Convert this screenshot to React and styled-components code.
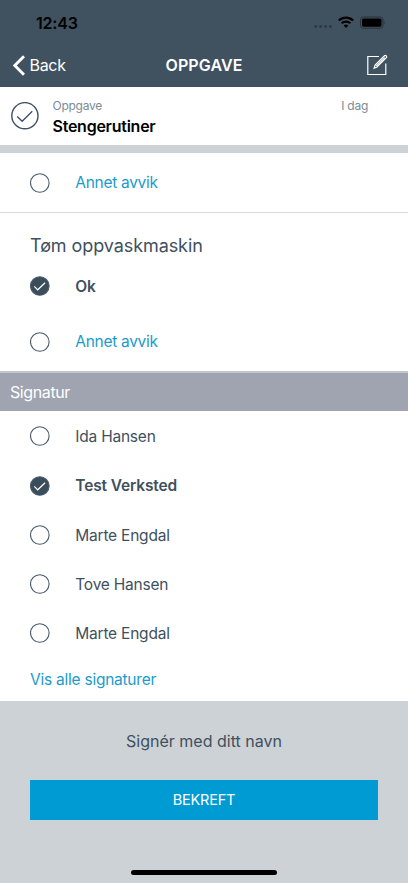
import { useState } from 'react'
import styled, { createGlobalStyle } from 'styled-components'

const GlobalStyle = createGlobalStyle`
    * {
        box-sizing: border-box;
    }
    body {
        margin: 0;
        background-color: #cdd2d6;
        font-family: Inter, "Liberation Sans", sans-serif;
        color: #3f505e;
    }
    button {
        font-family: inherit;
        border: none;
        padding: 0;
        background: none;
        cursor: pointer;
    }
`

const Screen = styled.div`
    width: 408px;
    height: 883px;
    display: flex;
    flex-direction: column;
    overflow: hidden;
    white-space: nowrap;
`

const StatusBar = styled.div`
    height: 44px;
    flex: none;
    padding: 1px 21px 0 36px;
    display: flex;
    align-items: center;
    justify-content: space-between;
    background-color: #40515f;
    color: black;
`

const Clock = styled.span`
    font-size: 16px;
    font-weight: 600;
    letter-spacing: -0.2px;
`

const NavBar = styled.header`
    height: 43px;
    flex: none;
    padding: 0 20px 0 13px;
    display: grid;
    grid-template-columns: 1fr auto 1fr;
    align-items: center;
    background-color: #40515f;
    border-bottom: 1px solid #424b60;
    color: white;
`

const BackButton = styled.button`
    display: flex;
    align-items: center;
    gap: 4.5px;
    font-size: 16px;
    letter-spacing: -0.3px;
    color: white;
`

const NavTitle = styled.h1`
    margin: 0 0 0 7px;
    font-size: 16px;
    font-weight: 600;
    letter-spacing: 0.1px;
`

const EditButton = styled.button`
    justify-self: end;
    display: flex;
`

const TaskCard = styled.section`
    height: 66px;
    flex: none;
    padding: 11px 40px 0 11px;
    display: flex;
    align-items: flex-start;
    background-color: white;
    border-bottom: 8px solid #cdd2d6;
`

const TaskIcon = styled.svg`
    margin: 3.5px 13.5px 0 0;
`

const TaskInfo = styled.div`
    flex: 1;
`

const Caption = styled.div`
    font-size: 12px;
    line-height: 16px;
    letter-spacing: -0.25px;
    color: #7b8b98;
`

const TaskName = styled.div`
    font-size: 16px;
    line-height: 20px;
    margin-top: 2px;
    font-weight: 600;
    letter-spacing: -0.25px;
    color: black;
`

const Question = styled.section`
    flex: none;
    padding-bottom: ${(props) => props.$bottom || 0};
    background-color: white;
    border-bottom: ${(props) => props.$border};
`

const QuestionTitle = styled.h2`
    margin: 0;
    padding: 20px 0 0 30px;
    font-size: 18px;
    line-height: 25px;
    font-weight: 400;
    letter-spacing: -0.08px;
`

const OptionButton = styled.button`
    width: 100%;
    height: ${(props) => props.$height || '49.25px'};
    padding-left: 30px;
    display: flex;
    align-items: center;
    gap: 25.3px;
    font-size: 15.5px;
    line-height: 20px;
    font-weight: ${(props) => (props.$checked ? 600 : 400)};
    letter-spacing: ${(props) => (props.$link ? '-0.3px' : props.$checked ? '-0.13px' : '-0.22px')};
    color: ${(props) => (props.$link ? '#1b9bcb' : '#3f505e')};
`

const OptionLabel = styled.span`
    padding-top: 1.4px;
`

const SectionHeader = styled.h2`
    height: 38px;
    flex: none;
    margin: 0;
    padding-left: 10px;
    display: flex;
    align-items: center;
    font-size: 16px;
    font-weight: 400;
    letter-spacing: -0.4px;
    background-color: #9fa4b0;
    color: white;
`

const Signatures = styled.section`
    height: 290px;
    flex: none;
    padding-top: 0.75px;
    background-color: white;
`

const ShowAll = styled.button`
    height: 43px;
    padding-left: 30px;
    font-size: 15.5px;
    letter-spacing: -0.24px;
    color: #1b9bcb;
`

const Footer = styled.footer`
    flex: 1;
    padding: 29px 30px 8px;
    display: flex;
    flex-direction: column;
    align-items: center;
    background-color: #cdd2d6;
`

const Hint = styled.div`
    font-size: 16px;
    line-height: 22px;
`

const ConfirmButton = styled.button`
    width: 100%;
    height: 39.5px;
    margin-top: 28px;
    background-color: #009bd3;
    color: white;
    font-size: 14.5px;
    letter-spacing: -0.2px;
`

const HomeIndicator = styled.div`
    width: 146px;
    height: 5px;
    margin-top: auto;
    border-radius: 3px;
    background-color: black;
`

const StatusIcons = () => (
    <svg width="73" height="14" viewBox="0 0 73 14">
        <g fill="#2c3944">
            <circle cx="1.7" cy="10.5" r="1.4" />
            <circle cx="6.6" cy="10.5" r="1.4" />
            <circle cx="11.5" cy="10.5" r="1.4" />
            <circle cx="16.4" cy="10.5" r="1.4" />
        </g>
        <g fill="none" stroke="black" strokeWidth="2.1">
            <path d="M24.8 4.5a10.5 10.5 0 0 1 14.4 0" />
            <path d="M27.6 7.3a6.5 6.5 0 0 1 8.8 0" />
        </g>
        <path d="M29.6 9.6a3.6 3.6 0 0 1 4.8 0L32 12z" />
        <rect x="46.5" y="1" width="22.5" height="11.2" rx="3" fill="none" stroke="#26323c" />
        <rect x="48" y="2.5" width="19.5" height="8.2" rx="1.6" />
        <path d="M70.3 4.8q1.6 1.7 0 3.6z" fill="#26323c" />
    </svg>
)

const BackIcon = () => (
    <svg width="12" height="21" viewBox="0 0 12 21">
        <path d="M11 1.2 1.8 10.5 11 19.8" fill="none" stroke="white" strokeWidth="2.9" />
    </svg>
)

const EditIcon = () => (
    <svg width="22" height="22" viewBox="0 0 22 22" fill="none" stroke="white" strokeWidth="1.2">
        <path d="M13 2.5H1.8v18h18V9.5" />
        <path d="m8.1 14.2 1-3.2 9.4-9.3q.8-.6 1.6.1l.3.3q.7.8 0 1.5L11 13z" />
        <path d="m10.2 12.1 8.6-8.5" />
    </svg>
)

// round checkbox, filled when selected
const Radio = ({ checked }) => (
    <svg width="20" height="20" viewBox="0 0 20 20" fill="none">
        <circle cx="9.8" cy="10" r="9.3" fill={checked ? '#3b4c5a' : 'none'} stroke="#4a5968" strokeWidth="1.1" />
        {checked && <path d="m4.3 10.4 3.4 3.4 7.4-7.1" stroke="white" strokeWidth="1.2" />}
    </svg>
)

const Option = ({ label, checked, link, height, onSelect }) => (
    <OptionButton $checked={checked} $link={link} $height={height} onClick={onSelect}>
        <Radio checked={checked} />
        <OptionLabel>{label}</OptionLabel>
    </OptionButton>
)

const people = [
    { id: 1, name: 'Ida Hansen' },
    { id: 2, name: 'Test Verksted' },
    { id: 3, name: 'Marte Engdal' },
    { id: 4, name: 'Tove Hansen' },
    { id: 5, name: 'Marte Engdal' },
]

const App = () => {
    const [firstAnswer, setFirstAnswer] = useState(null)
    const [answer, setAnswer] = useState('ok')
    const [signedBy, setSignedBy] = useState(2)

    return (
        <Screen>
            <GlobalStyle />
            <StatusBar>
                <Clock>12:43</Clock>
                <StatusIcons />
            </StatusBar>
            <NavBar>
                <BackButton>
                    <BackIcon />
                    Back
                </BackButton>
                <NavTitle>OPPGAVE</NavTitle>
                <EditButton aria-label="Rediger">
                    <EditIcon />
                </EditButton>
            </NavBar>
            <TaskCard>
                <TaskIcon width="28" height="28" viewBox="0 0 28 28" fill="none" stroke="#425063" strokeWidth="1.4">
                    <circle cx="13.9" cy="13.7" r="13.1" />
                    <path d="m6.2 14.5 5 4.8L21.3 9.3" />
                </TaskIcon>
                <TaskInfo>
                    <Caption>Oppgave</Caption>
                    <TaskName>Stengerutiner</TaskName>
                </TaskInfo>
                <Caption>I dag</Caption>
            </TaskCard>
            <Question $border="1px solid #d9dade">
                <Option
                    label="Annet avvik"
                    link
                    height="59px"
                    checked={firstAnswer === 'other'}
                    onSelect={() => setFirstAnswer('other')}
                />
            </Question>
            <Question $bottom="2px" $border="2px solid #c4c6ce">
                <QuestionTitle>Tøm oppvaskmaskin</QuestionTitle>
                <Option label="Ok" height="56px" checked={answer === 'ok'} onSelect={() => setAnswer('ok')} />
                <Option
                    label="Annet avvik"
                    link
                    height="55px"
                    checked={answer === 'other'}
                    onSelect={() => setAnswer('other')}
                />
            </Question>
            <SectionHeader>Signatur</SectionHeader>
            <Signatures>
                {people.map((person) => (
                    <Option
                        key={person.id}
                        label={person.name}
                        checked={signedBy === person.id}
                        onSelect={() => setSignedBy(person.id)}
                    />
                ))}
                <ShowAll>Vis alle signaturer</ShowAll>
            </Signatures>
            <Footer>
                <Hint>Signér med ditt navn</Hint>
                <ConfirmButton>BEKREFT</ConfirmButton>
                <HomeIndicator />
            </Footer>
        </Screen>
    )
}

export default App
